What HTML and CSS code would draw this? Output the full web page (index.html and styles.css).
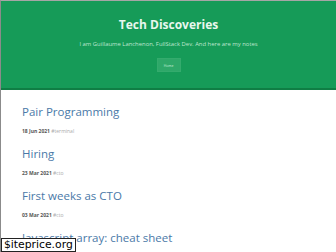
FILE: index.html
```html
<!DOCTYPE html>
<html>
<head>
<meta charset="utf-8">
<link rel="stylesheet" href="styles.css">
</head>
<body>
<div class="page">
  <header class="hero">
    <h1 class="hero-title">Tech Discoveries</h1>
    <p class="hero-sub">I am Guillaume Lanchenon, FullStack Dev. And here are my notes</p>
    <a class="hero-btn">Home</a>
  </header>
  <main class="posts">
    <article class="post">
      <h2 class="post-title">Pair Programming</h2>
      <div class="post-meta"><b>18 Jun 2021</b> <span class="tag">#terminal</span></div>
    </article>
    <article class="post">
      <h2 class="post-title">Hiring</h2>
      <div class="post-meta"><b>23 Mar 2021</b> <span class="tag">#cto</span></div>
    </article>
    <article class="post">
      <h2 class="post-title">First weeks as CTO</h2>
      <div class="post-meta"><b>03 Mar 2021</b> <span class="tag">#cto</span></div>
    </article>
    <article class="post">
      <h2 class="post-title">Javascript array: cheat sheet</h2>
      <div class="post-meta"><b>01 Mar 2021</b> <span class="tag">#javascript</span></div>
    </article>
  </main>
  <div class="badge">$iteprice.org</div>
</div>
</body>
</html>
```
FILE: styles.css
```css
html, body {
  margin: 0;
  padding: 0;
  background: #fff;
  overflow: hidden;
}
body {
  font-family: "Open Sans", "Noto Sans", sans-serif;
}
.page {
  width: 336px;
  height: 252px;
  box-sizing: border-box;
  border-top: 1px solid rgba(0,0,0,0.35);
  border-left: 1px solid rgba(0,0,0,0.45);
  position: relative;
  overflow: hidden;
}
.hero {
  background: #169b58;
  height: 72px;
  padding-top: 15px;
  border-bottom: 2px solid #0f7e44;
  display: flex;
  flex-direction: column;
  align-items: center;
}
.hero-title {
  margin: 0;
  font-size: 12px;
  font-weight: 700;
  color: #e8f7ee;
  line-height: 18px;
}
.hero-sub {
  margin: 5.5px 0 0;
  font-size: 5.9px;
  color: #bfe6cf;
  line-height: 8px;
}
.hero-btn {
  margin-top: 10.5px;
  width: 24px;
  height: 14px;
  background: #2ea869;
  border: 1px solid #34ab6d;
  box-sizing: border-box;
  font-size: 3.4px;
  color: #cdeedb;
  display: flex;
  align-items: center;
  justify-content: center;
}
.posts {
  padding: 11.5px 0 0 21px;
}
.post {
  height: 42px;
}
.post-title {
  margin: 0;
  font-size: 11.5px;
  font-weight: 400;
  color: #4a79a8;
  line-height: 20px;
}
.post-meta {
  margin-top: 5.5px;
  font-size: 5px;
  color: #555;
  line-height: 8px;
}
.post-meta b { font-weight: 700; }
.tag { color: #aaa; }
.badge {
  position: absolute;
  left: 0;
  bottom: 0;
  background: #fff;
  border: 1px solid #222;
  font-family: "DejaVu Sans", sans-serif;
  font-size: 10.8px;
  line-height: 12px;
  padding: 0 2px;
  color: #000;
}
```
